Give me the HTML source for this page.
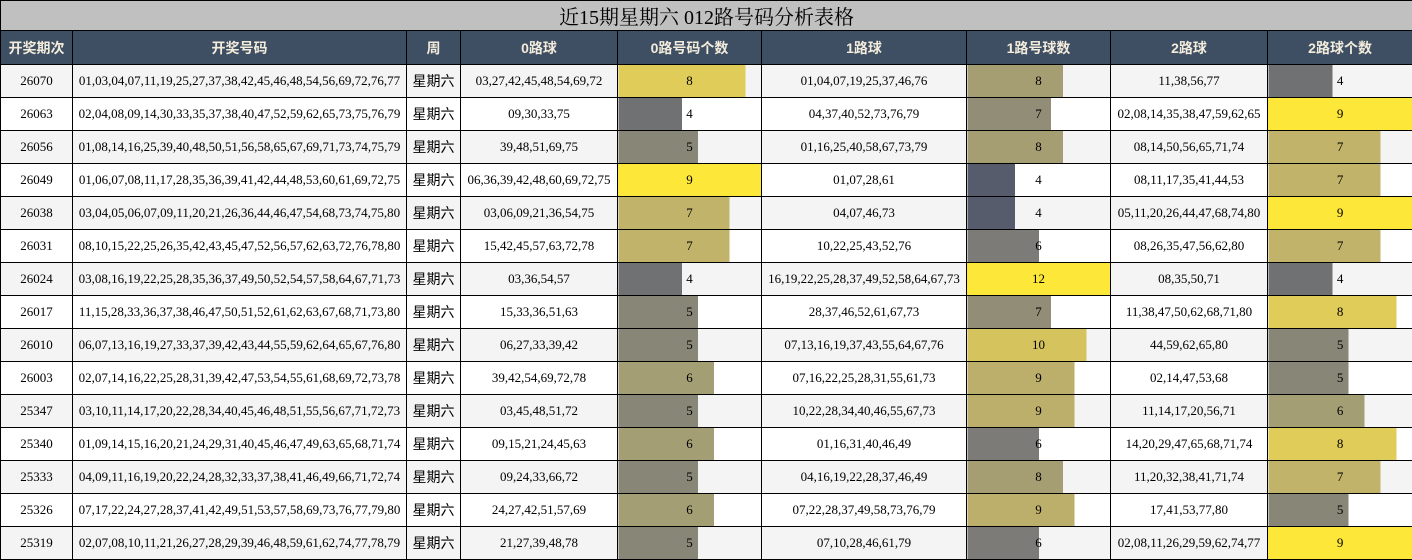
<!DOCTYPE html>
<html><head><meta charset="utf-8"><style>
body{margin:0;background:#fff;}
table{border-collapse:collapse;table-layout:fixed;width:1412px;font-family:"Liberation Serif","Noto Serif CJK SC",serif;font-size:13px;}
td,th{border:1px solid #000;padding:0;text-align:center;white-space:nowrap;overflow:hidden;}
.t td{background:#c0c0c0;font-size:20px;height:27px;color:#000;}
th{background:#3f4f63;color:#f3ecdc;font-family:"Liberation Sans","Noto Sans CJK SC",sans-serif;font-size:14px;font-weight:bold;height:33px;}
tbody tr td{height:32px;}
tbody tr:nth-child(odd) td{background-color:#f4f4f4;}
tbody tr:nth-child(even) td{background-color:#fff;}
.w{font-family:"Liberation Sans","Noto Sans CJK SC",sans-serif;font-size:14px;}
</style></head><body>
<table>
<colgroup><col style="width:72px"><col style="width:334px"><col style="width:54px"><col style="width:157px"><col style="width:144px"><col style="width:205px"><col style="width:144px"><col style="width:157px"><col style="width:145px"></colgroup>
<thead>
<tr class="t"><td colspan="9">近15期星期六 012路号码分析表格</td></tr>
<tr><th>开奖期次</th><th>开奖号码</th><th>周</th><th>0路球</th><th>0路号码个数</th><th>1路球</th><th>1路号球数</th><th>2路球</th><th>2路球个数</th></tr>
</thead>
<tbody id="b"></tbody>
</table>
<script>
var D=`26070|01,03,04,07,11,19,25,27,37,38,42,45,46,48,54,56,69,72,76,77|03,27,42,45,48,54,69,72|8|01,04,07,19,25,37,46,76|8|11,38,56,77|4
26063|02,04,08,09,14,30,33,35,37,38,40,47,52,59,62,65,73,75,76,79|09,30,33,75|4|04,37,40,52,73,76,79|7|02,08,14,35,38,47,59,62,65|9
26056|01,08,14,16,25,39,40,48,50,51,56,58,65,67,69,71,73,74,75,79|39,48,51,69,75|5|01,16,25,40,58,67,73,79|8|08,14,50,56,65,71,74|7
26049|01,06,07,08,11,17,28,35,36,39,41,42,44,48,53,60,61,69,72,75|06,36,39,42,48,60,69,72,75|9|01,07,28,61|4|08,11,17,35,41,44,53|7
26038|03,04,05,06,07,09,11,20,21,26,36,44,46,47,54,68,73,74,75,80|03,06,09,21,36,54,75|7|04,07,46,73|4|05,11,20,26,44,47,68,74,80|9
26031|08,10,15,22,25,26,35,42,43,45,47,52,56,57,62,63,72,76,78,80|15,42,45,57,63,72,78|7|10,22,25,43,52,76|6|08,26,35,47,56,62,80|7
26024|03,08,16,19,22,25,28,35,36,37,49,50,52,54,57,58,64,67,71,73|03,36,54,57|4|16,19,22,25,28,37,49,52,58,64,67,73|12|08,35,50,71|4
26017|11,15,28,33,36,37,38,46,47,50,51,52,61,62,63,67,68,71,73,80|15,33,36,51,63|5|28,37,46,52,61,67,73|7|11,38,47,50,62,68,71,80|8
26010|06,07,13,16,19,27,33,37,39,42,43,44,55,59,62,64,65,67,76,80|06,27,33,39,42|5|07,13,16,19,37,43,55,64,67,76|10|44,59,62,65,80|5
26003|02,07,14,16,22,25,28,31,39,42,47,53,54,55,61,68,69,72,73,78|39,42,54,69,72,78|6|07,16,22,25,28,31,55,61,73|9|02,14,47,53,68|5
25347|03,10,11,14,17,20,22,28,34,40,45,46,48,51,55,56,67,71,72,73|03,45,48,51,72|5|10,22,28,34,40,46,55,67,73|9|11,14,17,20,56,71|6
25340|01,09,14,15,16,20,21,24,29,31,40,45,46,47,49,63,65,68,71,74|09,15,21,24,45,63|6|01,16,31,40,46,49|6|14,20,29,47,65,68,71,74|8
25333|04,09,11,16,19,20,22,24,28,32,33,37,38,41,46,49,66,71,72,74|09,24,33,66,72|5|04,16,19,22,28,37,46,49|8|11,20,32,38,41,71,74|7
25326|07,17,22,24,27,28,37,41,42,49,51,53,57,58,69,73,76,77,79,80|24,27,42,51,57,69|6|07,22,28,37,49,58,73,76,79|9|17,41,53,77,80|5
25319|02,07,08,10,11,21,26,27,28,29,39,46,48,59,61,62,74,77,78,79|21,27,39,48,78|5|07,10,28,46,61,79|6|02,08,11,26,29,59,62,74,77|9`;
var C9={4:"#707173",5:"#878677",6:"#a39e74",7:"#c1b36a",8:"#e0cc58",9:"#fde738"};
var C12={4:"#575c6d",6:"#7c7b78",7:"#918d77",8:"#a69e73",9:"#bcae6b",10:"#d5c35e",12:"#fde738"};
function bar(v,m,C){var p=(v/m*100).toFixed(2);return '<td style="background-image:linear-gradient(to right,'+C[v]+' '+p+'%,transparent '+p+'%)">'+v+'</td>';}
var h="";D.split("\n").forEach(function(l){var a=l.split("|");
h+='<tr><td>'+a[0]+'</td><td>'+a[1]+'</td><td class="w">星期六</td><td>'+a[2]+'</td>'+bar(+a[3],9,C9)+'<td>'+a[4]+'</td>'+bar(+a[5],12,C12)+'<td>'+a[6]+'</td>'+bar(+a[7],9,C9)+'</tr>';});
document.getElementById("b").innerHTML=h;
</script>
</body></html>
